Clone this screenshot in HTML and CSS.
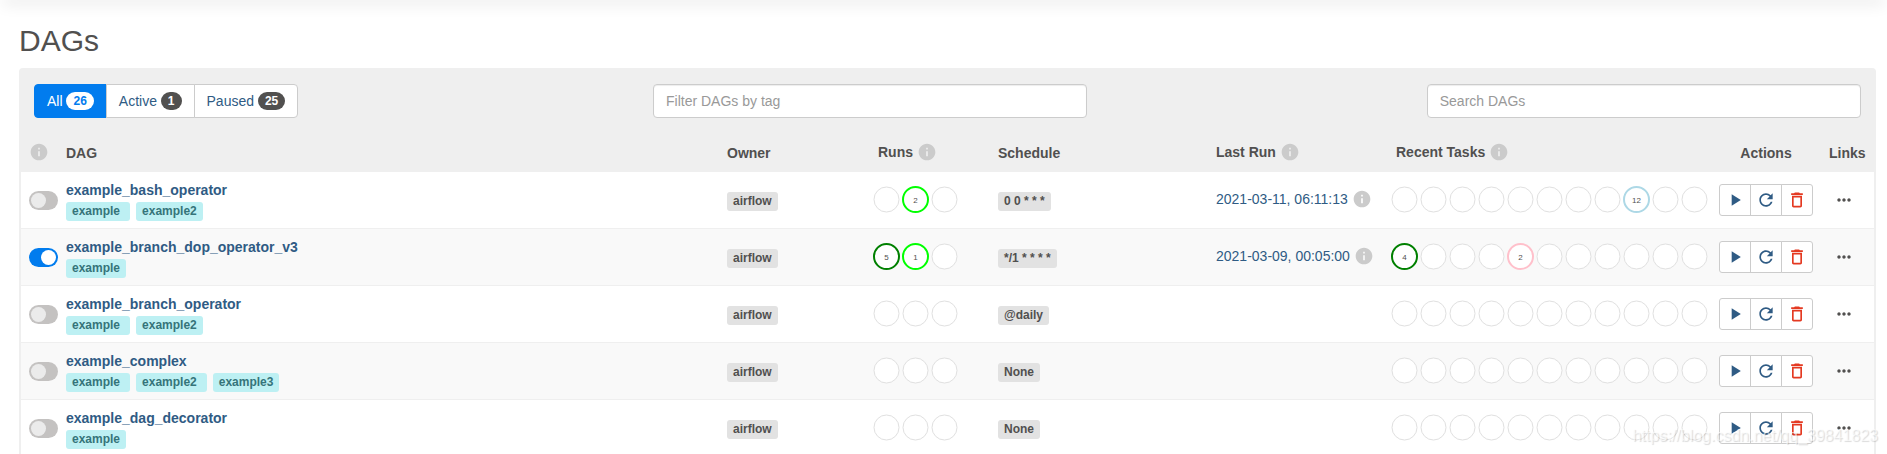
FILE: index.html
```
<!DOCTYPE html>
<html lang="en">
<head>
  <meta charset="UTF-8" />
  <title>Airflow – DAGs</title>
  <meta name="viewport" content="width=device-width, initial-scale=1.0" />
  <link rel="stylesheet" href="styles.css">
</head>
<body>

  <svg class="sprite" aria-hidden="true">
    <symbol id="icon-info" viewBox="0 0 24 24"><path d="M12 2C6.48 2 2 6.48 2 12s4.48 10 10 10 10-4.48 10-10S17.52 2 12 2zm1 15h-2v-6h2v6zm0-8h-2V7h2v2z"/></symbol>
    <symbol id="icon-play" viewBox="0 0 24 24"><path d="M8 5v14l11-7z"/></symbol>
    <symbol id="icon-refresh" viewBox="0 0 24 24"><path d="M17.65 6.35C16.2 4.9 14.21 4 12 4c-4.42 0-7.99 3.58-7.99 8s3.57 8 7.99 8c3.73 0 6.84-2.55 7.73-6h-2.08c-.82 2.33-3.04 4-5.65 4-3.31 0-6-2.69-6-6s2.69-6 6-6c1.66 0 3.14.69 4.22 1.78L13 11h7V4l-2.35 2.35z"/></symbol>
    <symbol id="icon-delete" viewBox="0 0 24 24"><path d="M6 19c0 1.1.9 2 2 2h8c1.1 0 2-.9 2-2V7H6v12zM8 9h8v10H8V9zm7.5-5l-1-1h-5l-1 1H5v2h14V4z"/></symbol>
    <symbol id="icon-more" viewBox="0 0 24 24"><path d="M6 10c-1.1 0-2 .9-2 2s.9 2 2 2 2-.9 2-2-.9-2-2-2zm12 0c-1.1 0-2 .9-2 2s.9 2 2 2 2-.9 2-2-.9-2-2-2zm-6 0c-1.1 0-2 .9-2 2s.9 2 2 2 2-.9 2-2-.9-2-2-2z"/></symbol>
  </svg>

  <div class="navbar"></div>

  <main class="container">
    <h1>DAGs</h1>

    <div class="panel">
      <!-- Filters -->
      <div class="toolbar">
        <div class="filter-status">
          <a href="#" class="btn active">All <span class="badge">26</span></a>
          <a href="#" class="btn">Active <span class="badge">1</span></a>
          <a href="#" class="btn">Paused <span class="badge">25</span></a>
        </div>
        <form class="filter-tags">
          <input type="text" name="tags" placeholder="Filter DAGs by tag" aria-label="Filter DAGs by tag" />
        </form>
        <form class="filter-search">
          <input type="text" name="search" placeholder="Search DAGs" aria-label="Search DAGs" />
        </form>
      </div>

      <!-- DAG list -->
      <table>
        <colgroup>
          <col class="col-toggle">
          <col>
          <col class="col-owner">
          <col class="col-runs">
          <col class="col-schedule">
          <col class="col-last-run">
          <col class="col-tasks">
          <col class="col-actions">
          <col class="col-links">
        </colgroup>
        <thead>
          <tr>
            <th><div class="with-info"><svg class="info"><use href="#icon-info"/></svg></div></th>
            <th>DAG</th>
            <th>Owner</th>
            <th><div class="with-info">Runs <svg class="info"><use href="#icon-info"/></svg></div></th>
            <th>Schedule</th>
            <th><div class="with-info">Last Run <svg class="info"><use href="#icon-info"/></svg></div></th>
            <th><div class="with-info">Recent Tasks <svg class="info"><use href="#icon-info"/></svg></div></th>
            <th class="center">Actions</th>
            <th>Links</th>
          </tr>
        </thead>
        <tbody id="dagTableBody"></tbody>
      </table>
    </div>
  </main>

  <div class="watermark">https://blog.csdn.net/qq_39841823</div>

  <script>
    const RUN_STATES = 3;
    const TASK_STATES = 11;

    // runs / tasks: position of the state -> [count, color]
    const dags = [
      { id: 'example_bash_operator', tags: ['example', 'example2'], schedule: '0 0 * * *', lastRun: '2021-03-11, 06:11:13',
        runs: { 1: [2, 'lime'] }, tasks: { 8: [12, 'lightblue'] } },
      { id: 'example_branch_dop_operator_v3', active: true, tags: ['example'], schedule: '*/1 * * * *', lastRun: '2021-03-09, 00:05:00',
        runs: { 0: [5, 'green'], 1: [1, 'lime'] }, tasks: { 0: [4, 'green'], 4: [2, 'pink'] } },
      { id: 'example_branch_operator', tags: ['example', 'example2'], schedule: '@daily' },
      { id: 'example_complex', tags: ['example', 'example2', 'example3'], schedule: 'None' },
      { id: 'example_dag_decorator', tags: ['example'], schedule: 'None' }
    ];

    function icon(name, cls) {
      return `<svg class="${cls}"><use href="#icon-${name}"/></svg>`;
    }

    function circles(total, states = {}) {
      let html = '';
      for (let i = 0; i < total; i++) {
        const [count, color] = states[i] || ['', ''];
        html += `
          <svg class="state ${color}" viewBox="0 0 27 27">
            <circle cx="13.5" cy="13.5" r="12.5"/>
            <text x="13.5" y="16.5">${count}</text>
          </svg>`;
      }
      return `<div class="states">${html}</div>`;
    }

    function renderDags() {
      document.getElementById('dagTableBody').innerHTML = dags.map(dag => `
        <tr>
          <td><input type="checkbox" class="switch" aria-label="Pause/unpause ${dag.id}" ${dag.active ? 'checked' : ''} /></td>
          <td>
            <a href="#" class="dag-name">${dag.id}</a>
            <div class="tags">${dag.tags.map(tag => `<a href="#" class="tag">${tag}</a>`).join('')}</div>
          </td>
          <td class="label-cell"><a href="#" class="label">airflow</a></td>
          <td class="state-cell">${circles(RUN_STATES, dag.runs)}</td>
          <td class="label-cell"><a href="#" class="label">${dag.schedule}</a></td>
          <td>${dag.lastRun ? `<div class="with-info"><a href="#">${dag.lastRun}</a> ${icon('info', 'info')}</div>` : ''}</td>
          <td class="state-cell">${circles(TASK_STATES, dag.tasks)}</td>
          <td>
            <div class="actions">
              <button type="button" aria-label="Trigger DAG">${icon('play', 'icon')}</button>
              <button type="button" aria-label="Refresh DAG">${icon('refresh', 'icon')}</button>
              <button type="button" class="danger" aria-label="Delete DAG">${icon('delete', 'icon')}</button>
            </div>
          </td>
          <td class="links"><a href="#" aria-label="More links">${icon('more', 'icon')}</a></td>
        </tr>
      `).join('');
    }

    renderDags();
  </script>

</body>
</html>
```
FILE: styles.css
```
* {
  box-sizing: border-box;
}
body {
  font-family: "Liberation Sans", Arial, sans-serif;
  font-size: 14px;
  line-height: 20px;
  color: #51504f;
  background: #fff;
  margin: 0;
  overflow: hidden;
}
a {
  color: #2f5b84;
  text-decoration: none;
}
.sprite {
  display: none;
}
.navbar {
  height: 0;
  margin: 0 4px;
  box-shadow: 0 0 16px 2px rgba(0,0,0,0.2);
}
.container {
  padding: 24px 11px 0 19px;
}
h1 {
  font-size: 30px;
  font-weight: normal;
  line-height: 34px;
  margin: 0 0 10px;
}
.panel {
  background: #efefef;
  border-radius: 4px;
}
/* Toolbar */
.toolbar {
  display: grid;
  grid-template-columns: repeat(12, 1fr);
  padding: 16px 0;
}
.toolbar > * {
  padding: 0 15px;
}
.filter-status {
  grid-column: 1 / span 4;
  display: flex;
}
.filter-tags {
  grid-column: 5 / span 3;
}
.filter-search {
  grid-column: 10 / span 3;
}
.btn {
  background: #fff;
  border: 1px solid #ccc;
  padding: 6px 12px;
  margin-left: -1px;
}
.btn:first-child {
  margin-left: 0;
  border-radius: 4px 0 0 4px;
}
.btn:last-child {
  border-radius: 0 4px 4px 0;
}
.btn.active {
  background: #017cee;
  border-color: #017cee;
  color: #fff;
}
.badge {
  display: inline-block;
  background: #51504f;
  color: #fff;
  font-size: 12px;
  font-weight: bold;
  line-height: 12px;
  padding: 3px 7px;
  border-radius: 10px;
  vertical-align: top;
  margin-top: 1px;
}
.btn.active .badge {
  background: #fff;
  color: #017cee;
}
input[type="text"] {
  display: block;
  width: 100%;
  height: 34px;
  padding: 6px 12px;
  font: inherit;
  color: #51504f;
  border: 1px solid #ccc;
  border-radius: 4px;
  box-shadow: inset 0 1px 1px rgba(0,0,0,0.075);
}
input[type="text"]::placeholder {
  color: #999;
}
/* Table */
table {
  width: 100%;
  table-layout: fixed;
  border-collapse: separate;
  border-spacing: 0;
  border: solid #efefef;
  border-width: 0 2px;
}
.col-toggle { width: 37px; }
.col-owner { width: 151px; }
.col-runs { width: 120px; }
.col-schedule { width: 218px; }
.col-last-run { width: 180px; }
.col-tasks { width: 323px; }
.col-actions { width: 110px; }
.col-links { width: 53px; }
th {
  height: 38px;
  padding: 0 8px;
  text-align: left;
  white-space: nowrap;
}
th.center {
  text-align: center;
}
td {
  height: 57px;
  padding: 0 8px;
  border-bottom: 1px solid #efefef;
  vertical-align: middle;
  white-space: nowrap;
}
tbody tr {
  background: #fff;
}
tbody tr:nth-child(even) {
  background: #f9f9f9;
}
.with-info {
  display: flex;
  align-items: center;
  gap: 4px;
  padding-bottom: 2px;
}
.info {
  width: 20px;
  height: 20px;
  fill: #cbcbcb;
}
.icon {
  display: block;
  width: 20px;
  height: 20px;
  fill: currentColor;
}
.switch {
  appearance: none;
  display: block;
  width: 29px;
  height: 19px;
  margin: 0;
  padding: 2px;
  background: #c4c2c1;
  border-radius: 10px;
}
.switch::before {
  content: "";
  display: block;
  width: 15px;
  height: 15px;
  border-radius: 50%;
  background: #ebebeb;
}
.switch:checked {
  background: #017cee;
}
.switch:checked::before {
  background: #fff;
  margin-left: auto;
}
.dag-name {
  display: block;
  font-weight: bold;
  margin-bottom: 2px;
}
.tags {
  display: flex;
  gap: 6px;
}
.tag, .label {
  display: inline-block;
  font-size: 12px;
  font-weight: bold;
  line-height: 17px;
  padding: 1px 6px;
  border-radius: 3px;
}
.tag {
  background: #bdf0f3;
  color: #35747a;
}
.tag:not(:last-child) {
  padding-right: 10px;
}
.label {
  background: #e2e2e2;
  color: #51504f;
  vertical-align: middle;
}
.label-cell {
  padding-top: 2px;
}
.state-cell {
  padding: 0 3px 2px;
}
.states {
  display: flex;
  gap: 2px;
}
.state {
  width: 27px;
  height: 27px;
}
.state circle {
  fill: #fff;
  stroke: #e0e0e0;
  stroke-width: 1;
}
.state text {
  font-size: 8px;
  text-anchor: middle;
  fill: #51504f;
}
.state.lime circle { stroke: lime; stroke-width: 2; }
.state.green circle { stroke: green; stroke-width: 2; }
.state.pink circle { stroke: pink; stroke-width: 2; }
.state.lightblue circle { stroke: lightblue; stroke-width: 2; }
.actions {
  display: flex;
}
.actions button {
  background: #fff;
  color: #2f5b84;
  border: 1px solid #ccc;
  padding: 5px;
  margin-left: -1px;
  cursor: pointer;
}
.actions button:first-child {
  margin-left: 0;
  border-radius: 3px 0 0 3px;
}
.actions button:last-child {
  border-radius: 0 3px 3px 0;
}
.actions .danger {
  color: #e43921;
}
.links {
  padding: 0 16px 0 8px;
}
.links a {
  display: flex;
  justify-content: center;
  color: #51504f;
}
.watermark {
  position: absolute;
  right: 9px;
  bottom: 8px;
  font-size: 16px;
  color: rgba(255,255,255,0.6);
  text-shadow: 1px 1px 1px rgba(0,0,0,0.15);
  pointer-events: none;
}
```
